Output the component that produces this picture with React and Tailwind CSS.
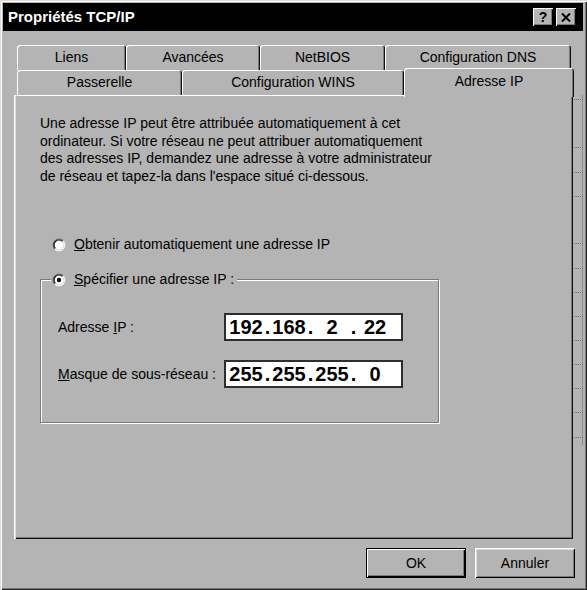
import React from 'react'

const font = { fontFamily: '"Liberation Sans", Arial, sans-serif' }

const Radio = ({ checked }) => (
  <svg width="14" height="14" viewBox="0 0 14 14" className="shrink-0">
    <circle cx="7" cy="7" r="6" fill="#fff" />
    <path d="M2.76 11.24 A6 6 0 0 1 11.24 2.76" fill="none" stroke="#6e6e6e" strokeWidth="1.2" />
    <path d="M3.46 10.54 A5 5 0 0 1 10.54 3.46" fill="none" stroke="#1a1a1a" strokeWidth="1.2" />
    <path d="M11.24 2.76 A6 6 0 0 1 2.76 11.24" fill="none" stroke="#ffffff" strokeWidth="1" />
    <path d="M10.54 3.46 A5 5 0 0 1 3.46 10.54" fill="none" stroke="#d6d6d6" strokeWidth="1" />
    {checked && <circle cx="7" cy="7" r="2.2" fill="#000" />}
  </svg>
)

const Tab = ({ label, w }) => (
  <div
    className={`${w} h-[25px] flex items-center justify-center text-[14px] text-black rounded-t-[3px] shadow-[inset_1px_1px_0_#fff,inset_-1px_0_0_#111,inset_-2px_0_0_#7a7a7a]`}
  >
    {label}
  </div>
)

const IpField = ({ parts }) => (
  <div className="w-[179px] h-[28px] bg-white border-2 border-[#2e2e2e] flex items-center pl-[2px] font-bold text-[20px] text-black leading-none">
    {parts.map((p, i) => (
      <React.Fragment key={i}>
        <span className="w-[36px] text-center">{p}</span>
        {i < 3 && <span className="w-[7px] text-center">.</span>}
      </React.Fragment>
    ))}
  </div>
)

const Button = ({ children, isDefault }) => (
  <button
    className={`w-[100px] h-[30px] flex items-center justify-center text-[14px] text-black bg-[#b4b4b4] ${
      isDefault
        ? 'border border-black shadow-[inset_1px_1px_0_#fff,inset_-1px_-1px_0_#000,inset_-2px_-2px_0_#7a7a7a]'
        : 'shadow-[inset_1px_1px_0_#fff,inset_-1px_-1px_0_#000,inset_2px_2px_0_#dcdcdc,inset_-2px_-2px_0_#7a7a7a]'
    }`}
  >
    {children}
  </button>
)

const TitleButton = ({ children }) => (
  <div className="w-[20px] h-[18px] bg-[#b4b4b4] flex items-center justify-center shadow-[inset_1px_1px_0_#fff,inset_-1px_-1px_0_#000,inset_-2px_-2px_0_#7a7a7a]">
    {children}
  </div>
)

const ticks = [99, 147, 172, 196, 243, 268, 292, 316, 340, 364, 388, 412, 437]

export default function App() {
  return (
    <div
      className="w-[587px] h-[590px] bg-[#b4b4b4] p-[3px] flex flex-col shadow-[inset_1px_1px_0_#dcdcdc,inset_2px_2px_0_#fff,inset_-1px_-1px_0_#222,inset_-2px_-2px_0_#7a7a7a]"
      style={font}
    >
      {/* title bar */}
      <div className="h-[28px] w-[580px] bg-black flex items-center justify-between pl-[5px] pr-[7px]">
        <span className="text-white font-bold text-[15px]">Propriétés TCP/IP</span>
        <div className="flex gap-[3px]">
          <TitleButton>
            <span className="font-bold text-[14px] leading-none text-black">?</span>
          </TitleButton>
          <TitleButton>
            <svg width="10" height="9" viewBox="0 0 10 9">
              <path d="M1 0.5 L9 8.5 M9 0.5 L1 8.5" stroke="#000" strokeWidth="2" />
            </svg>
          </TitleButton>
        </div>
      </div>

      <div className="flex flex-1">
        {/* main column */}
        <div className="w-[571px] pl-[11px] flex flex-col">
          <div className="mt-[14px] pl-[3px] flex">
            <Tab label="Liens" w="w-[109px]" />
            <Tab label="Avancées" w="w-[134px]" />
            <Tab label="NetBIOS" w="w-[125px]" />
            <Tab label="Configuration DNS" w="w-[186px]" />
          </div>
          <div className="pl-[3px] flex h-[25px]">
            <Tab label="Passerelle" w="w-[165px]" />
            <Tab label="Configuration WINS" w="w-[222px]" />
            <div className="relative z-10 -mt-[2px] h-[29px] w-[170px] bg-[#b4b4b4] flex justify-center pt-[3px] text-[14px] text-black rounded-t-[3px] shadow-[inset_1px_1px_0_#fff,inset_-1px_0_0_#111,inset_-2px_0_0_#7a7a7a]">
              Adresse IP
            </div>
          </div>

          {/* panel */}
          <div className="w-[559px] h-[444px] pt-[20px] pl-[26px] flex flex-col shadow-[inset_1px_1px_0_#fff,inset_2px_0_0_#dcdcdc,inset_-1px_-1px_0_#111,inset_-2px_-2px_0_#7a7a7a]">
            <p className="text-[14px] leading-[17.5px] text-black whitespace-nowrap">
              Une adresse IP peut être attribuée automatiquement à cet
              <br />
              ordinateur. Si votre réseau ne peut attribuer automatiquement
              <br />
              des adresses IP, demandez une adresse à votre administrateur
              <br />
              de réseau et tapez-la dans l'espace situé ci-dessous.
            </p>

            <div className="mt-[51px] ml-[12px] flex items-center gap-[8px] h-[17px] text-[14px] text-black">
              <Radio />
              <span>
                <u>O</u>btenir automatiquement une adresse IP
              </span>
            </div>

            <div className="relative mt-[26px] w-[399px] h-[144px] border border-[#7a7a7a] shadow-[1px_1px_0_#fff,inset_1px_1px_0_#fff] pt-[33px] pl-[17px] flex flex-col gap-[19px]">
              <div className="absolute -top-[9px] left-[10px] bg-[#b4b4b4] px-[1px] flex items-center gap-[8px] h-[17px] text-[14px] text-black pr-[3px]">
                <Radio checked />
                <span>
                  <u>S</u>pécifier une adresse IP :
                </span>
              </div>
              <div className="flex items-center">
                <span className="w-[166px] text-[14px] text-black">
                  Adresse <u>I</u>P :
                </span>
                <IpField parts={['192', '168', '2', '22']} />
              </div>
              <div className="flex items-center">
                <span className="w-[166px] text-[14px] text-black">
                  <u>M</u>asque de sous-réseau :
                </span>
                <IpField parts={['255', '255', '255', '0']} />
              </div>
            </div>
          </div>

          {/* buttons */}
          <div className="mt-[9px] flex justify-end gap-[9px] -mr-[1px]">
            <Button isDefault>OK</Button>
            <Button>Annuler</Button>
          </div>
        </div>

        {/* right strip */}
        <div className="relative flex-1 mr-[1px]">
          <div className="absolute right-0 top-[64px] h-[350px] w-px bg-[#8a8a8a]" />
          {ticks.map((t) => (
            <div
              key={t}
              className="absolute left-0 right-0 h-px border-t border-dotted border-[#6a6a6a]"
              style={{ top: t - 31 }}
            />
          ))}
        </div>
      </div>
    </div>
  )
}
